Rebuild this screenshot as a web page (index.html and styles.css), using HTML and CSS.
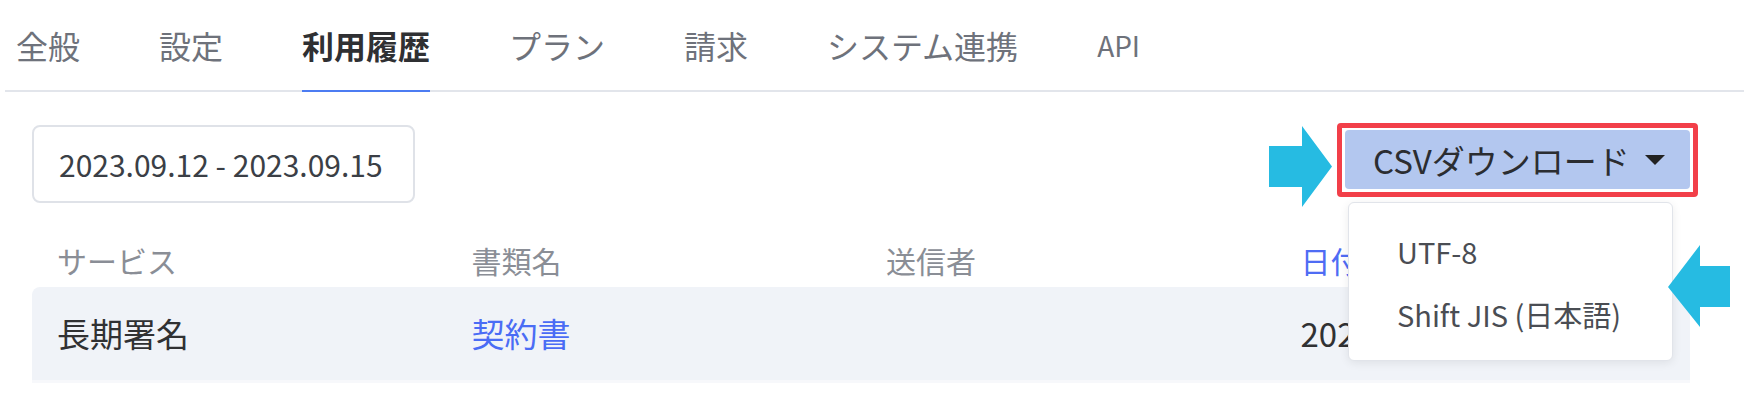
FILE: index.html
```html
<!DOCTYPE html>
<html lang="ja">
<head>
    <meta charset="UTF-8">
    <meta name="viewport" content="width=device-width, initial-scale=1.0">
    <title>利用履歴</title>
    <link rel="stylesheet" href="styles.css">
</head>
<body>
    <nav class="tabs">
        <a class="tab">全般</a>
        <a class="tab">設定</a>
        <a class="tab active">利用履歴</a>
        <a class="tab">プラン</a>
        <a class="tab">請求</a>
        <a class="tab">システム連携</a>
        <a class="tab tab-small">API</a>
    </nav>

    <div class="content">
        <div class="toolbar">
            <div class="date-range">2023.09.12 - 2023.09.15</div>

            <div class="download">
                <svg class="arrow arrow-right" width="63" height="81" viewBox="0 0 63 81">
                    <polygon points="0,20 33,20 33,0 63,40.5 33,81 33,61 0,61" fill="#26bbe2"/>
                </svg>
                <div class="highlight">
                    <button class="download-btn">CSVダウンロード<span class="caret"></span></button>
                </div>
                <ul class="dropdown">
                    <li>UTF-8</li>
                    <li>Shift JIS (日本語)</li>
                </ul>
                <svg class="arrow arrow-left" width="62" height="82" viewBox="0 0 62 82">
                    <polygon points="62,21 32,21 32,0 0,42 32,82 32,62 62,62" fill="#26bbe2"/>
                </svg>
            </div>
        </div>

        <div class="table">
            <div class="row head">
                <div class="cell">サービス</div>
                <div class="cell">書類名</div>
                <div class="cell">送信者</div>
                <div class="cell sorted">日付</div>
            </div>
            <div class="row body">
                <div class="cell">長期署名</div>
                <div class="cell link">契約書</div>
                <div class="cell"></div>
                <div class="cell">2023.09.15 14:32</div>
            </div>
        </div>
    </div>
</body>
</html>
```

FILE: styles.css
```css
body {
    margin: 0;
    font-family: "Noto Sans CJK JP", "Noto Sans", sans-serif;
    background-color: #fff;
    color: #303133;
}
.tabs {
    display: flex;
    align-items: flex-end;
    gap: 79px;
    height: 90px;
    margin-left: 5px;
    padding-left: 11px;
    border-bottom: 2px solid #e2e5eb;
}
.tab {
    display: block;
    height: 88px;
    line-height: 86px;
    font-size: 32px;
    color: #6e727b;
    border-bottom: 2px solid transparent;
    margin-bottom: -2px;
}
.tab.active {
    font-weight: bold;
    color: #2f3033;
    border-bottom-color: #4c7cf2;
}
.tab-small {
    font-size: 28px;
}
.content {
    padding: 0 54px 0 32px;
}
.toolbar {
    display: flex;
    justify-content: space-between;
    align-items: flex-start;
    padding-top: 31px;
}
.date-range {
    box-sizing: border-box;
    width: 383px;
    height: 78px;
    margin-top: 2px;
    padding-left: 25px;
    line-height: 74px;
    font-size: 30px;
    color: #3b3f46;
    border: 2px solid #dfe2e8;
    border-radius: 8px;
}
.download {
    position: relative;
    margin-right: -8px;
}
.highlight {
    border: 5px solid #f23f49;
    border-radius: 4px;
    padding: 2px 3px 3px 3px;
}
.download-btn {
    display: flex;
    align-items: center;
    height: 59px;
    width: 345px;
    padding: 0 25px 0 28px;
    font-family: inherit;
    font-size: 33px;
    color: #2b2d31;
    background-color: #b3c7ef;
    border: none;
    border-radius: 4px;
}
.caret {
    margin-left: auto;
    width: 0;
    height: 0;
    border-left: 10px solid transparent;
    border-right: 10px solid transparent;
    border-top: 10px solid #222;
}
.dropdown {
    position: absolute;
    top: 79px;
    left: 11px;
    z-index: 2;
    box-sizing: border-box;
    width: 325px;
    height: 159px;
    margin: 0;
    padding: 17px 0 0;
    list-style: none;
    background-color: #fff;
    border: 1px solid #e1e4ea;
    border-radius: 6px;
    box-shadow: 0 2px 10px rgba(0, 0, 0, 0.08);
}
.dropdown li {
    line-height: 63px;
    padding-left: 48px;
    font-size: 29px;
    color: #4a4d53;
}
.arrow {
    position: absolute;
    z-index: 3;
}
.arrow-right {
    left: -68px;
    top: 3px;
}
.arrow-left {
    left: 331px;
    top: 122px;
}
.table {
    margin-top: 30px;
}
.row {
    display: grid;
    grid-template-columns: repeat(4, 1fr);
}
.cell {
    padding-left: 25px;
    white-space: nowrap;
}
.head {
    height: 54px;
    line-height: 54px;
    font-size: 30px;
    color: #8a8e96;
}
.sorted {
    color: #4f6cf4;
}
.body {
    height: 93px;
    line-height: 93px;
    font-size: 33px;
    background-color: #f0f3f8;
    border-radius: 8px 8px 0 0;
    border-bottom: 3px solid #f7f8fb;
}
.link {
    color: #4a6cf5;
}
```
